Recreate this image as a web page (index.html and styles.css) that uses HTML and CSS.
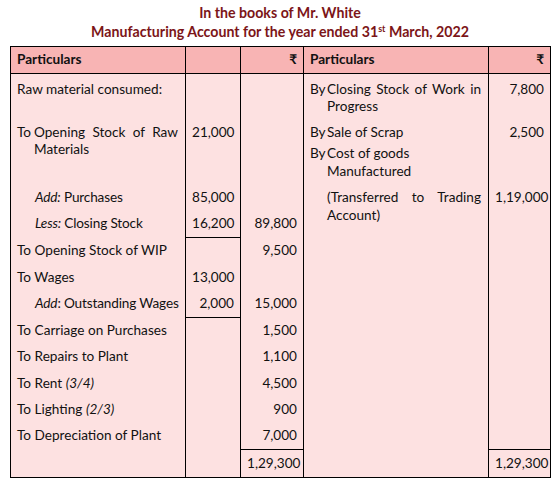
FILE: index.html
```html
<!DOCTYPE html>
<html lang="en">
<head>
    <meta charset="UTF-8">
    <meta name="viewport" content="width=device-width, initial-scale=1.0">
    <title>Manufacturing Account</title>
    <link rel="stylesheet" href="styles.css">
</head>
<body>

    <!-- Heading -->
    <div class="account-title">
        <p>In the books of Mr. White</p>
        <p>Manufacturing Account for the year ended 31<sup>st</sup> March, 2022</p>
    </div>

    <!-- Manufacturing Account table -->
    <table class="ledger">
        <colgroup>
            <col class="col-part">
            <col class="col-inner">
            <col class="col-outer">
            <col class="col-part-r">
            <col class="col-amt-r">
        </colgroup>
        <thead>
            <tr>
                <th class="part">Particulars</th>
                <th class="amt"></th>
                <th class="amt">₹</th>
                <th class="part">Particulars</th>
                <th class="amt">₹</th>
            </tr>
        </thead>
        <tbody>
            <tr class="first-row">
                <td class="part">Raw material consumed:</td>
                <td class="amt"></td>
                <td class="amt"></td>
                <td class="part">
                    <div class="entry"><span class="pre">By</span><span class="txt">Closing Stock of Work in Progress</span></div>
                </td>
                <td class="amt">7,800</td>
            </tr>
            <tr>
                <td class="part">
                    <div class="entry"><span class="pre">To</span><span class="txt">Opening Stock of Raw Materials</span></div>
                </td>
                <td class="amt">21,000</td>
                <td class="amt"></td>
                <td class="part">
                    <div class="entry"><span class="pre">By</span><span class="txt">Sale of Scrap</span></div>
                    <div class="entry gap"><span class="pre">By</span><span class="txt">Cost of goods<br>Manufactured</span></div>
                </td>
                <td class="amt">2,500</td>
            </tr>
            <tr>
                <td class="part indent"><em>Add:</em> Purchases</td>
                <td class="amt">85,000</td>
                <td class="amt"></td>
                <td class="part" rowspan="2">
                    <div class="entry"><span class="pre"></span><span class="txt">(Transferred to Trading Account)</span></div>
                </td>
                <td class="amt" rowspan="2">1,19,000</td>
            </tr>
            <tr>
                <td class="part indent"><em>Less:</em> Closing Stock</td>
                <td class="amt rule-b">16,200</td>
                <td class="amt">89,800</td>
            </tr>
            <tr>
                <td class="part">To Opening Stock of WIP</td>
                <td class="amt"></td>
                <td class="amt">9,500</td>
                <td class="part" rowspan="8"></td>
                <td class="amt" rowspan="8"></td>
            </tr>
            <tr>
                <td class="part">To Wages</td>
                <td class="amt">13,000</td>
                <td class="amt"></td>
            </tr>
            <tr>
                <td class="part indent"><em>Add</em>: Outstanding Wages</td>
                <td class="amt rule-b">2,000</td>
                <td class="amt">15,000</td>
            </tr>
            <tr>
                <td class="part">To Carriage on Purchases</td>
                <td class="amt"></td>
                <td class="amt">1,500</td>
            </tr>
            <tr>
                <td class="part">To Repairs to Plant</td>
                <td class="amt"></td>
                <td class="amt">1,100</td>
            </tr>
            <tr>
                <td class="part">To Rent <em>(3/4)</em></td>
                <td class="amt"></td>
                <td class="amt">4,500</td>
            </tr>
            <tr>
                <td class="part">To Lighting <em>(2/3)</em></td>
                <td class="amt"></td>
                <td class="amt">900</td>
            </tr>
            <tr>
                <td class="part">To Depreciation of Plant</td>
                <td class="amt"></td>
                <td class="amt">7,000</td>
            </tr>
            <tr>
                <td class="part"></td>
                <td class="amt"></td>
                <td class="amt rule-t">1,29,300</td>
                <td class="part"></td>
                <td class="amt rule-t">1,29,300</td>
            </tr>
        </tbody>
    </table>

</body>
</html>
```

FILE: styles.css
```css
body {
    font-family: Lato, "Noto Sans", sans-serif;
    font-size: 13.6px;
    margin: 0;
    padding: 0 7px 0 10px;
    background-color: #fff;
    color: #111;
}

.account-title {
    text-align: center;
    color: #7c1518;
    font-weight: bold;
    font-size: 14.2px;
    padding-top: 3px;
    margin-bottom: 5px;
}

.account-title p {
    margin: 0;
    line-height: 19px;
}

.account-title sup {
    font-size: 9px;
    line-height: 0;
    vertical-align: 5px;
}

.ledger {
    width: 541px;
    table-layout: fixed;
    border-collapse: collapse;
    border: 1px solid #000;
    background-color: #fde1e1;
}

.col-part { width: 175px; }
.col-inner { width: 55px; }
.col-outer { width: 63px; }
.col-part-r { width: 185px; }
.col-amt-r { width: 62px; }

.ledger th, .ledger td {
    border-left: 1px solid #000;
    border-right: 1px solid #000;
    padding: 4.45px 6px;
    line-height: 17.5px;
    vertical-align: top;
    font-weight: normal;
}

.ledger thead th {
    background-color: #f8b4b4;
    border-bottom: 1px solid #000;
    font-weight: bold;
}

.ledger .part {
    text-align: left;
    padding-right: 7px;
    white-space: nowrap;
}

.ledger .amt {
    text-align: right;
    padding-right: 6px;
}

.ledger .indent {
    padding-left: 24px;
    letter-spacing: -0.15px;
}

.first-row td {
    padding-top: 6.4px;
    padding-bottom: 3.5px;
}

.entry {
    display: flex;
}

.entry.gap {
    margin-top: 4px;
}

.entry .pre {
    flex: 0 0 17px;
}

.entry .txt {
    flex: 1;
    text-align: justify;
    white-space: normal;
}

.rule-b {
    border-bottom: 1px solid #000;
}

.rule-t {
    border-top: 1px solid #000;
}
```
